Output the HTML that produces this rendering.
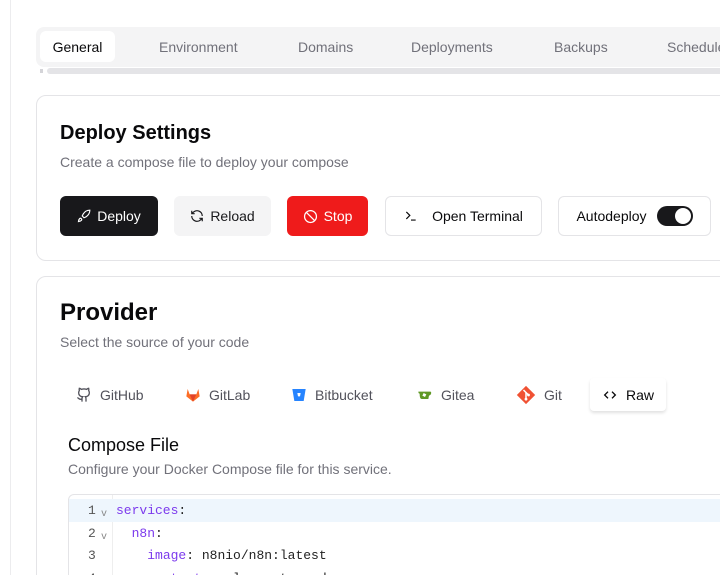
<!DOCTYPE html>
<html><head><meta charset="utf-8"><style>
*{box-sizing:border-box;margin:0;padding:0}
html,body{width:720px;height:575px;overflow:hidden}
body{background:#fff;font-family:"Liberation Sans",sans-serif;color:#09090b;position:relative}
.abs{position:absolute}
.vl{left:10px;top:0;width:1px;height:575px;background:#ececee}
.tabs{left:36px;top:27px;width:700px;height:40px;background:#f4f4f5;border-radius:8px}
.tab{position:absolute;top:12px;font-size:14px;color:#71717a}
.tact{left:4px;top:4px;width:75px;height:31px;background:#fff;border-radius:6px;font-size:14px;color:#09090b;padding-top:8px;text-align:center}
.sb{left:47px;top:68px;width:680px;height:6px;background:#e4e4e7;border-radius:3px}
.card{left:36px;width:700px;border:1px solid #e4e4e7;border-radius:10px;background:#fff}
.btn{position:absolute;top:196px;height:40px;border-radius:6px;font-size:14px;display:flex;align-items:center;justify-content:center;gap:6px;font-weight:500}
.pt{position:absolute;top:386px;height:18px;font-size:14px;color:#52525b;display:flex;align-items:center;gap:8px}
.mono{font-family:"Liberation Mono",monospace;font-size:13px}
</style></head><body>
<div class="abs vl"></div>
<div class="abs tabs">
 <div class="abs tact">General</div>
 <div class="tab" style="left:123px">Environment</div>
 <div class="tab" style="left:262px">Domains</div>
 <div class="tab" style="left:375px">Deployments</div>
 <div class="tab" style="left:518px">Backups</div>
 <div class="tab" style="left:631px">Schedules</div>
</div>
<div class="abs" style="left:40px;top:69px;width:3px;height:4px;background:#d4d4d8"></div>
<div class="abs sb"></div>

<div class="abs card" style="top:95px;height:166px"></div>
<div class="abs" style="left:60px;top:122px;font-size:20px;font-weight:600">Deploy Settings</div>
<div class="abs" style="left:60px;top:154px;font-size:14px;color:#71717a">Create a compose file to deploy your compose</div>
<div class="btn" style="left:60px;width:98px;background:#18181b;color:#fff"><svg width="14" height="14" viewBox="0 0 24 24" fill="none" stroke="#fff" stroke-width="2"><path d="M4.5 16.5c-1.5 1.3-2 5-2 5s3.7-.5 5-2c.7-.8.7-2.1-.1-2.9a2.2 2.2 0 0 0-2.9-.1z"/><path d="M12 15l-3-3a22 22 0 0 1 2-4A12.9 12.9 0 0 1 22 2c0 2.700-.8 7.500-6 11a22 22 0 0 1-4 2z"/></svg>Deploy</div>
<div class="btn" style="left:174px;width:97px;background:#f4f4f5;color:#18181b"><svg width="14" height="14" viewBox="0 0 24 24" fill="none" stroke="#18181b" stroke-width="2"><path d="M21 12a9 9 0 0 0-15-6.7L3 8M3 3v5h5M3 12a9 9 0 0 0 15 6.7l3-2.7M16 16h5v5"/></svg>Reload</div>
<div class="btn" style="left:287px;width:81px;background:#ef1b1b;color:#fff"><svg width="15" height="15" viewBox="0 0 24 24" fill="none" stroke="#fff" stroke-width="2"><circle cx="12" cy="12" r="9.5"/><path d="M5.3 5.3l13.4 13.4"/></svg>Stop</div>
<div class="btn" style="left:385px;width:157px;border:1px solid #e4e4e7;color:#09090b;gap:14px"><svg width="14" height="14" viewBox="0 0 24 24" fill="none" stroke="#09090b" stroke-width="2"><path d="M4 17l6-6-6-6M12 19h8"/></svg>Open Terminal</div>
<div class="btn" style="left:558px;width:153px;border:1px solid #e4e4e7;color:#09090b;gap:10px">Autodeploy<span style="width:36px;height:20px;border-radius:10px;background:#18181b;position:relative;display:inline-block"><span style="position:absolute;right:2px;top:2px;width:16px;height:16px;border-radius:50%;background:#fff"></span></span></div>

<div class="abs card" style="top:276px;height:320px"></div>
<div class="abs" style="left:60px;top:299px;font-size:24px;font-weight:600">Provider</div>
<div class="abs" style="left:60px;top:334px;font-size:14px;color:#71717a">Select the source of your code</div>
<div class="pt" style="left:76px"><svg width="16" height="16" viewBox="0 0 24 24" fill="none" stroke="#52525b" stroke-width="2"><path d="M15 22v-4a4.8 4.8 0 0 0-1-3.5c3 0 6-2 6-5.5.1-1.3-.3-2.5-1-3.5.3-1.2.3-2.4 0-3.5 0 0-1 0-3 1.5a15 15 0 0 0-8 0C6 2 5 2 5 2c-.3 1.1-.3 2.3 0 3.5A5.4 5.4 0 0 0 4 9c0 3.5 3 5.5 6 5.5-.4.5-.7 1.1-.8 1.7-.2.6-.2 1.2-.2 1.8v4M9 18c-4.5 2-5-2-7-2"/></svg>GitHub</div>
<div class="pt" style="left:185px"><svg width="16" height="16" viewBox="0 0 24 24"><path d="M12 22L2 14l2-11 3 8h10l3-8 2 11z" fill="#fc6d26"/><path d="M12 22L7 11h10z" fill="#e24329"/></svg>GitLab</div>
<div class="pt" style="left:291px"><svg width="16" height="16" viewBox="0 0 24 24"><path d="M2 3h20l-3 18H5z" fill="#2684ff"/><path d="M9.5 9h5l-1 5h-3z" fill="#fff"/></svg>Bitbucket</div>
<div class="pt" style="left:417px"><svg width="16" height="16" viewBox="0 0 24 24"><path d="M2 7h18c2 0 2 5-2 6l-1 5H7C4 18 4 12 4 10 2 10 2 7 2 7z" fill="#609926"/><path d="M10 9l4 2-2 4-4-2z" fill="#fff"/></svg>Gitea</div>
<div class="pt" style="left:516px"><svg width="20" height="20" viewBox="0 0 24 24"><path d="M12 1l11 11-11 11L1 12z" fill="#f05133"/><path d="M9 6l3 3v8M12 9l3 3" stroke="#fff" stroke-width="1.8" fill="none"/><circle cx="12" cy="17" r="1.7" fill="#fff"/><circle cx="15" cy="12" r="1.7" fill="#fff"/></svg>Git</div>
<div class="abs" style="left:590px;top:378px;width:76px;height:33px;background:#fff;border-radius:4px;box-shadow:0 2px 3px rgba(0,0,0,0.12)"></div>
<div class="pt" style="left:602px;color:#09090b;font-weight:500"><svg width="16" height="16" viewBox="0 0 24 24" fill="none" stroke="#09090b" stroke-width="2"><path d="M9 7l-5 5 5 5M15 7l5 5-5 5"/></svg>Raw</div>
<div class="abs" style="left:68px;top:435px;font-size:18px;font-weight:500">Compose File</div>
<div class="abs" style="left:68px;top:461px;font-size:14px;color:#71717a">Configure your Docker Compose file for this service.</div>
<div class="abs" style="left:68px;top:494px;width:680px;height:100px;border:1px solid #e4e4e7;border-radius:6px 0 0 0"></div>
<div class="abs" style="left:112px;top:495px;width:1px;height:90px;background:#eee"></div>
<div class="abs" style="left:69px;top:499px;width:660px;height:23px;background:#eef6fd"></div>
<div class="abs mono" style="left:88px;top:500px;color:#555;line-height:22.5px">1<br>2<br>3<br>4</div>
<div class="abs mono" style="left:101px;top:504px;color:#888;font-size:10px;line-height:22.5px">v<br>v</div>
<div class="abs mono" style="left:116px;top:500px;line-height:22.5px;white-space:pre;color:#222"><span style="color:#7c3aed">services</span>:
  <span style="color:#7c3aed">n8n</span>:
    <span style="color:#7c3aed">image</span>: n8nio/n8n:latest
    <span style="color:#7c3aed">restart</span>: unless-stopped</div>
</body></html>
